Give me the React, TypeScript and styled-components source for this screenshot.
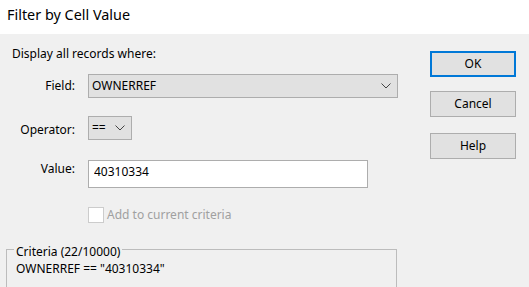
import React from "react";
import styled, { createGlobalStyle } from "styled-components";

const GlobalStyle = createGlobalStyle`
  body {
    margin: 0;
    background: #f0f0f0;
    font-family: "Noto Sans", "Liberation Sans", sans-serif;
    font-size: 12px;
    color: #000;
  }
`;

const Dialog = styled.div`
  width: 529px;
  height: 287px;
  overflow: hidden;
  background: #f0f0f0;
`;

const TitleBar = styled.div`
  height: 34px;
  background: #fff;
  padding-left: 7px;
  font-size: 14.4px;
  line-height: 30px;
`;

const Body = styled.div`
  display: flex;
`;

const Form = styled.div`
  width: 430px;
  padding: 12px 0 0 6px;
  box-sizing: border-box;
`;

const Heading = styled.div`
  padding-left: 6px;
  line-height: 16px;
`;

const Row = styled.div<{ $top: number }>`
  display: flex;
  align-items: flex-start;
  margin-top: ${(p) => p.$top}px;
`;

const Label = styled.div<{ $shift: number }>`
  width: 69px;
  margin-right: 13px;
  padding-top: ${(p) => p.$shift}px;
  text-align: right;
  line-height: 16px;
`;

const Combo = styled.div<{ $width: number }>`
  width: ${(p) => p.$width}px;
  height: 24px;
  box-sizing: border-box;
  display: flex;
  align-items: center;
  justify-content: space-between;
  padding: 0 6px 0 3px;
  background: #e1e1e1;
  border: 1px solid #adadad;
  line-height: 16px;
`;

const Chevron = () => (
  <svg width="10" height="6" viewBox="0 0 10 6">
    <polyline points="0.5,0.5 5,5 9.5,0.5" fill="none" stroke="#444" strokeWidth="1" />
  </svg>
);

const TextBox = styled.input`
  width: 280px;
  height: 28px;
  box-sizing: border-box;
  margin: 0;
  padding: 0 5px 6px;
  border: 1px solid #adadad;
  background: #fff;
  font: inherit;
  line-height: 16px;
  color: #000;
  outline: none;
`;

const CheckRow = styled.div`
  display: flex;
  align-items: center;
  gap: 3px;
  margin: 19px 0 0 82px;
  line-height: 16px;
  color: #a0a0a0;
`;

const CheckBox = styled.span`
  width: 16px;
  height: 16px;
  box-sizing: border-box;
  border: 1px solid #cccccc;
  background: #fff;
`;

const Group = styled.fieldset`
  width: 391px;
  height: 70px;
  box-sizing: border-box;
  margin: 15px 0 0;
  padding: 1px 9px 0 7px;
  border: 1px solid #bcbcbc;
`;

const Legend = styled.legend`
  padding: 6px 2px 0;
  line-height: 16px;
`;

const GroupText = styled.div`
  padding-left: 2px;
  line-height: 16px;
`;

const Buttons = styled.div`
  display: flex;
  flex-direction: column;
  padding-top: 17px;
`;

const Button = styled.button<{ $primary?: boolean; $top: number }>`
  width: 86px;
  height: 26px;
  box-sizing: border-box;
  margin: ${(p) => p.$top}px 0 0;
  padding: 0;
  background: #e1e1e1;
  border: ${(p) => (p.$primary ? "2px solid #0078d7" : "1px solid #adadad")};
  font: inherit;
  line-height: 16px;
  color: #000;
`;

export default function App() {
  return (
    <>
      <GlobalStyle />
      <Dialog>
        <TitleBar>Filter by Cell Value</TitleBar>
        <Body>
          <Form>
            <Heading>Display all records where:</Heading>
            <Row $top={12}>
              <Label $shift={4}>Field:</Label>
              <Combo $width={310}>
                <span>OWNERREF</span>
                <Chevron />
              </Combo>
            </Row>
            <Row $top={18}>
              <Label $shift={6}>Operator:</Label>
              <Combo $width={44}>
                <span>==</span>
                <Chevron />
              </Combo>
            </Row>
            <Row $top={20}>
              <Label $shift={1}>Value:</Label>
              <TextBox defaultValue="40310334" />
            </Row>
            <CheckRow>
              <CheckBox />
              <span>Add to current criteria</span>
            </CheckRow>
            <Group>
              <Legend>Criteria (22/10000)</Legend>
              <GroupText>OWNERREF == "40310334"</GroupText>
            </Group>
          </Form>
          <Buttons>
            <Button $primary $top={0}>OK</Button>
            <Button $top={14}>Cancel</Button>
            <Button $top={16}>Help</Button>
          </Buttons>
        </Body>
      </Dialog>
    </>
  );
}
